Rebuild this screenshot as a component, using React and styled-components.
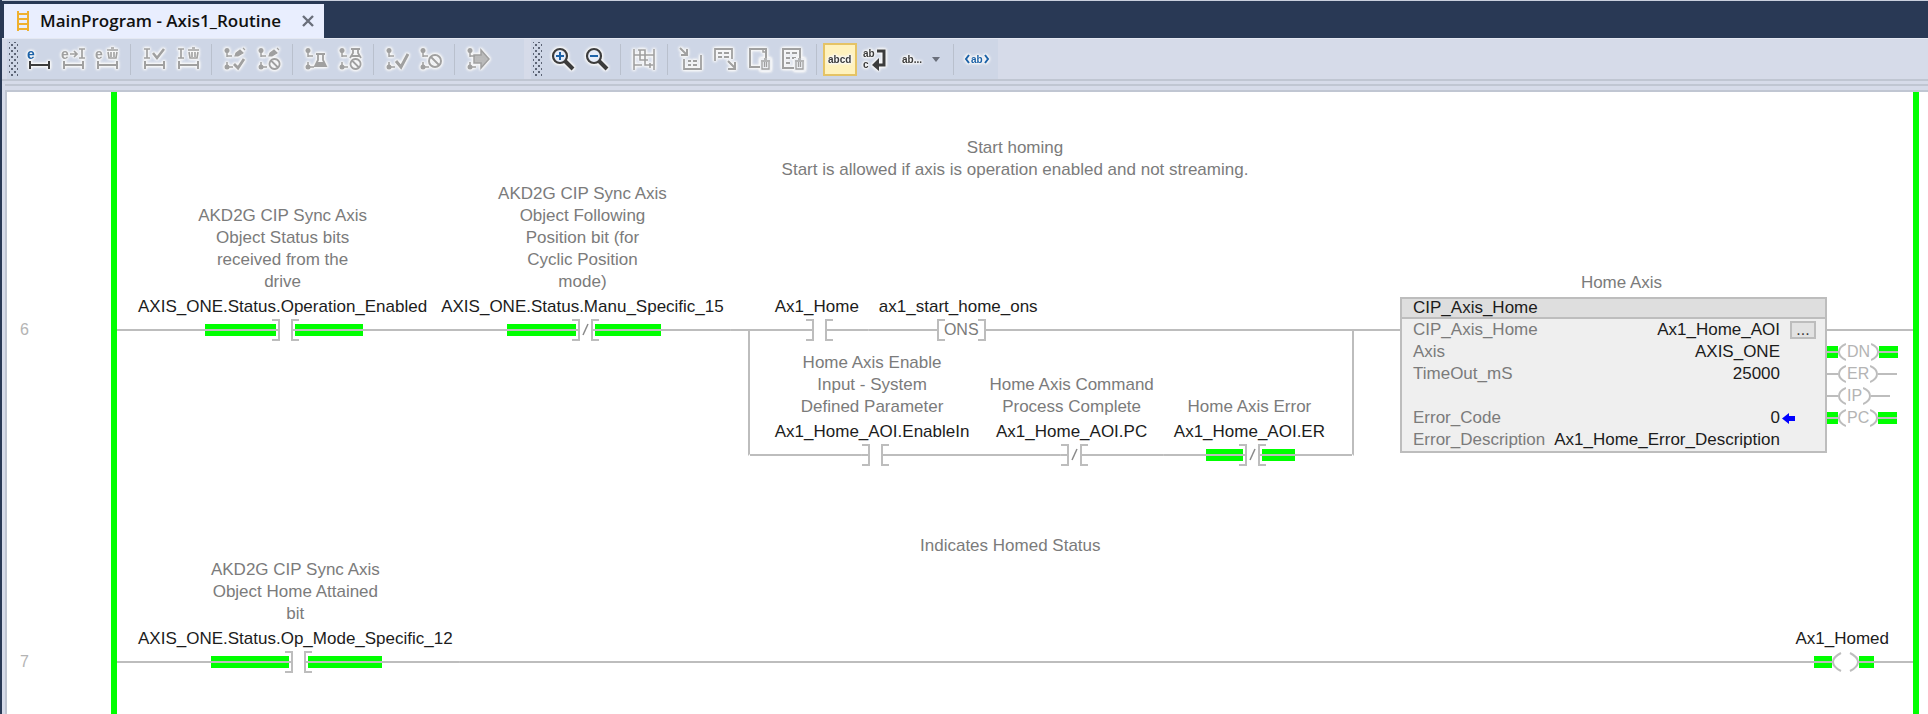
import styled, { createGlobalStyle, css } from "styled-components";

const GREEN = "#00ff00";
const WIRE = "#bdbdbd";

const GlobalStyle = createGlobalStyle`
	html, body, #root {
		height: 100%;
	}
	body {
		margin: 0;
		background: #ffffff;
		font-family: "Liberation Sans", Arial, sans-serif;
		font-size: 17px;
		line-height: 22px;
		color: #1c1c1c;
	}
	h1, p {
		margin: 0;
	}
`

const Window = styled.div`
		display: flex;
		flex-direction: column;
		min-height: 100%;
		box-sizing: border-box;
		border-left: 2px solid #293955;
		background: #d6dbe9;
	`

/* ---- tab strip ---- */

const TabStrip = styled.div`
		display: flex;
		padding: 3px 0 0 2px;
		border-top: 1px solid #c9d0dd;
		background: #293955;
	`

const Tab = styled.div`
		display: flex;
		align-items: center;
		height: 34px;
		padding: 0 6px 0 12px;
		background: #e9eefe;
		color: #111111;
	`

const TabTitle = styled.h1`
		margin: 0 17px 0 10px;
		font-family: "Open Sans", "Noto Sans", sans-serif;
		font-size: 17px;
		font-weight: 600;
		line-height: 24px;
	`

const CloseButton = styled.button`
		display: flex;
		padding: 4px;
		border: 0;
		background: none;
		color: #6a6f7b;
	`

/* ---- tool bar ---- */

const Bars = styled.div`
		display: flex;
		gap: 7px;
		padding-left: 5px;
		border-top: 1px solid #e4e8f2;
		border-bottom: 2px solid #c0c6d2;
	`

const Bar = styled.div`
		display: flex;
		align-items: center;
		height: 40px;
		padding: 0 ${p => p.$tail || 0}px 0 2px;
		background: #ced6e6;
	`

const Grip = styled.span`
		width: 9px;
		height: 34px;
		margin-right: 4px;
		background-image:
			radial-gradient(circle, #5c6475 1px, transparent 1px),
			radial-gradient(circle, #5c6475 1px, transparent 1px);
		background-size: 6px 6px;
		background-position: 0 0, 3px 3px;
	`

const ToolButton = styled.button`
		display: flex;
		align-items: center;
		justify-content: center;
		width: 34px;
		height: 33px;
		box-sizing: border-box;
		padding: 0;
		border: 2px solid transparent;
		background: none;
		color: ${p => p.disabled ? "#a0a0a0" : "#3c3c3c"};
		${p => p.$active && css`
			border-color: #e5c365;
			background: #fff2bd;
		`}
		${p => p.$narrow && css`
			width: 22px;
		`}
	`

const Separator = styled.span`
		width: 1px;
		height: 31px;
		margin: 0 6px;
		background: #b9c0cd;
	`

const Icon = styled.svg`
		flex: none;
		fill: none;
		stroke: currentColor;
		stroke-width: 2;
		filter: drop-shadow(0 0 1px #f8f8f8) drop-shadow(0 0 1px #f8f8f8) drop-shadow(0 0 1px #f8f8f8);
		text {
			fill: currentColor;
			stroke: none;
			font-family: "Liberation Sans", Arial, sans-serif;
			font-size: 10px;
			font-weight: 700;
		}
		.edit {
			font-size: 14px;
		}
	`

const Groove = styled.div`
		height: 3px;
		margin-left: 3px;
		border-bottom: 2px solid #c0c6d2;
	`

/* ---- ladder ---- */

const Sheet = styled.main`
		flex: 1;
		display: flex;
		flex-direction: column;
		margin: 4px 0 0 3px;
		border-top: 2px solid #c0c6d2;
		border-left: 2px solid #c0c6d2;
		background: #ffffff;
	`

const Rung = styled.section`
		display: grid;
		grid-template-columns: 104px 6px 1fr 6px 9px;
		grid-template-rows: auto auto auto;
		&:last-child {
			flex: 1;
			grid-template-rows: auto auto 1fr;
		}
	`

const Rail = styled.div`
		grid-row: 1 / -1;
		grid-column: ${p => p.$right ? 4 : 2};
		background: ${GREEN};
	`

const RungNumber = styled.span`
		grid-row: 2;
		grid-column: 1;
		align-self: end;
		padding-left: 13px;
		color: #b4b4b4;
		font-size: 16px;
	`

const RungComment = styled.p`
		grid-row: 1;
		grid-column: 3;
		padding: 45px 0 2px;
		color: #7b7b7b;
		text-align: center;
		white-space: pre;
	`

const Logic = styled.div`
		grid-row: 2 / span 2;
		grid-column: 3;
		display: grid;
		grid-template-rows: subgrid;
		grid-template-columns: ${p => p.$columns};
		padding-bottom: 24px;
	`

const Run = styled.div`
		--pad: ${p => p.$tight ? 7 : 10}px;
		display: flex;
		grid-row: 1;
	`

const Wire = styled.span`
		flex: 1 0 ${p => p.$min || 0}px;
		align-self: flex-end;
		height: 22px;
		background: linear-gradient(${WIRE}, ${WIRE}) center / 100% 2px no-repeat;
	`

const StartWire = styled(Wire)`
		flex: none;
		width: ${p => p.$width}px;
	`

const Element = styled.div`
		display: flex;
		flex-direction: column;
		justify-content: flex-end;
	`

const Note = styled.p`
		margin-bottom: 3px;
		padding: 0 var(--pad, 10px);
		color: #7b7b7b;
		text-align: center;
		white-space: pre;
	`

const Tag = styled.span`
		margin: 0 var(--pad, 10px) 1px;
		text-align: center;
		white-space: nowrap;
	`

const Symbols = styled.div`
		display: flex;
		height: 22px;
	`

const Lead = styled.span`
		display: flex;
		align-items: center;
		flex: 1 1 ${p => p.$left ? 6 : 0}px;
		justify-content: ${p => p.$left ? "flex-end" : "flex-start"};
		padding: ${p => p.$left ? "0 0 0 var(--pad, 10px)" : "0 var(--pad, 10px) 0 0"};
		background: linear-gradient(${WIRE}, ${WIRE}) center / 100% 2px no-repeat;
	`

const Power = styled.span`
		width: 50%;
		height: 12px;
		background: linear-gradient(${GREEN} 5px, ${WIRE} 5px, ${WIRE} 7px, ${GREEN} 7px);
	`

const Glyph = styled.svg`
		flex: none;
		fill: none;
		stroke: ${WIRE};
		stroke-width: 2;
	`

const OneShot = styled.span`
		padding: 0 5px;
		border: solid ${WIRE};
		border-width: 0 2px;
		background:
			linear-gradient(${WIRE}, ${WIRE}) left top / 6px 2px,
			linear-gradient(${WIRE}, ${WIRE}) left bottom / 6px 2px,
			linear-gradient(${WIRE}, ${WIRE}) right top / 6px 2px,
			linear-gradient(${WIRE}, ${WIRE}) right bottom / 6px 2px;
		background-repeat: no-repeat;
		color: #7b7b7b;
		font-size: 16px;
	`

const Branch = styled.div`
		grid-row: 1 / span 2;
		display: grid;
		grid-template-rows: subgrid;
	`

const Leg = styled.div`
		display: flex;
		align-items: flex-end;
	`

const LowerLeg = styled.div`
		margin: -12px 0 10px;
		padding-top: 23px;
		border: solid ${WIRE};
		border-width: 0 2px 2px;
		border-bottom-color: transparent;
	`

const LowerLegItems = styled.div`
		display: flex;
		align-items: flex-end;
		margin-bottom: -12px;
	`

const BlockArea = styled.div`
		grid-row: 1 / span 2;
		align-self: end;
		display: flex;
		align-items: flex-end;
		padding-bottom: 13px;
	`

const BlockTable = styled.table`
		width: 427px;
		border: 2px solid ${WIRE};
		border-spacing: 0;
		background: #efefef;
		caption {
			padding: 0 0 3px 16px;
			color: #7b7b7b;
		}
		thead th {
			padding: 0 11px;
			border-bottom: 2px solid ${WIRE};
			background: #dedede;
			font-weight: 400;
			line-height: 18px;
			text-align: left;
		}
		tbody th {
			height: 22px;
			padding: 0 0 0 11px;
			color: #7b7b7b;
			font-weight: 400;
			text-align: left;
		}
		td {
			padding: 0;
			text-align: right;
		}
		td:last-child {
			width: 45px;
			text-align: left;
		}
	`

const MoreButton = styled.button`
		display: block;
		width: 26px;
		height: 18px;
		margin-left: 10px;
		padding: 0;
		border: 2px solid ${WIRE};
		background: #e2e2e2;
		color: #3c3c3c;
		font: 16px/10px "Liberation Sans", Arial, sans-serif;
	`

const ArrowIcon = styled.svg`
		display: block;
		margin-left: 2px;
		fill: #0000ff;
	`

const Outputs = styled.div`
		width: 86px;
		padding-bottom: 24px;
	`

const OutputWire = styled(Wire)`
		display: block;
	`

const OutputRow = styled.div`
		display: flex;
		align-items: center;
		height: 22px;
		color: #b4b4b4;
		font-size: 16px;
	`

const OutputLead = styled.span`
		width: ${p => p.$tail ? 19 : 11}px;
		height: ${p => p.$on ? 12 : 2}px;
		background: ${p => p.$on
			? `linear-gradient(${GREEN} 5px, ${WIRE} 5px, ${WIRE} 7px, ${GREEN} 7px)`
			: WIRE};
	`

const OutputName = styled.span`
		margin: 0 1px;
	`

const measure = <path d="M3 14v8M22 14v8M3 18h19" />
const dots = (
	<>
		<path d="M4 4v6M4 9h5M4 15v5M4 20h6" strokeWidth="1.500" />
		<circle cx="4" cy="3.500" r="2.500" fill="currentColor" stroke="none" />
		<circle cx="4" cy="20" r="2.500" fill="currentColor" stroke="none" />
	</>
)
const pencil = <path d="M12 9l1-3 4-3 3 3-5 3zM20 1l2 2" fill="currentColor" strokeWidth="1.200" />
const ban = <path d="M17.500 12a5 5 0 1 0 .1 0zM14 13.500l7 7" strokeWidth="1.800" />
const bin = <path d="M12 3h11M16 1h3M13 5l1 6h7l1-6M16 5v5M19 5v5" strokeWidth="1.600" />
const smallBin = (
	<>
		<path d="M13 11h11v13H13z" fill="#eef0f4" stroke="none" />
		<path d="M14 14h9M17 12h3M15 15v7h7v-7M17.500 15v5M19.500 15v5" strokeWidth="1.300" />
	</>
)

const icons = {
	start: <><text className="edit" x="0" y="12" style={{ fill: "#1c62a8" }}>e</text>{measure}</>,
	insert: (
		<>
			<text className="edit" x="0" y="12">e</text>
			<path d="M9 7h7M13 4l3 3-3 3M18 2h6M18 11h6M21 2v9" strokeWidth="1.700" />
			{measure}
		</>
	),
	removeEdit: <><text className="edit" x="0" y="12">e</text>{bin}{measure}</>,
	accept: (
		<>
			<path d="M2 2h6M2 11h6M5 2v9" strokeWidth="1.700" />
			<path d="M11 6l4 5 7-9" strokeWidth="2.600" />
			{measure}
		</>
	),
	cancel: <><path d="M2 2h6M2 11h6M5 2v9" strokeWidth="1.700" />{bin}{measure}</>,
	acceptProgram: <>{dots}{pencil}<path d="M11 17l4 4 6-9" strokeWidth="2.800" /></>,
	cancelProgram: <>{dots}{pencil}{ban}</>,
	test: (
		<>
			{dots}
			<path d="M12 7h9M14 7v6l-3 6h11l-3-6V7" strokeWidth="1.800" />
			<path d="M12 17h9" strokeWidth="4" />
		</>
	),
	untest: (
		<>
			{dots}
			<path d="M13 2h9M15 2v4l-3 5M20 2v4l3 5M14 9h8" strokeWidth="1.800" />
			{ban}
		</>
	),
	assemble: <>{dots}<path d="M11 14l5 6 7-13" strokeWidth="3" /></>,
	disassemble: <>{dots}<circle cx="16" cy="14" r="6" /><path d="M12 10l8 8" /></>,
	finalize: (
		<>
			{dots}
			<path d="M8 8h7V3l8 9-8 9v-5H8z" fill="currentColor" fillOpacity="0.7" strokeWidth="1.500" />
		</>
	),
	zoomIn: (
		<>
			<path d="M14 14l8 8" strokeWidth="4" />
			<circle cx="9" cy="9" r="7" fill="#e6ecf8" strokeWidth="2.200" />
			<path d="M5 9h8M9 5v8" stroke="#1c62a8" />
		</>
	),
	zoomOut: (
		<>
			<path d="M14 14l8 8" strokeWidth="4" />
			<circle cx="9" cy="9" r="7" fill="#e6ecf8" strokeWidth="2.200" />
			<path d="M5 9h8" stroke="#1c62a8" />
		</>
	),
	branch: <path d="M2 2v21M22 2v21M2 8h20M2 18h8M8 3v10h8M8 3h-2M8 3h5v15h8M18 16v5" strokeWidth="1.600" />,
	rungIn: (
		<>
			<path d="M1 1l6 6M8 2v6H2" />
			<path d="M5 12v10h17V8M5 22h17M9 14h3M14 14h4M9 18h3M14 18h4" strokeWidth="1.800" />
		</>
	),
	rungOut: (
		<>
			<path d="M2 14V2h17v10M5 6h4M11 6h5M5 10h4M11 10h5" strokeWidth="1.800" />
			<path d="M15 14l7 7M22 15v7h-7" />
		</>
	),
	pageDelete: <><path d="M19 11V2H3v18h10" /><path d="M16 2v3h3" strokeWidth="1.500" />{smallBin}</>,
	listDelete: (
		<>
			<path d="M19 11V2H2v19h11" />
			<path d="M5 6h4M11 6h5M5 11h4M11 11h4M5 16h4" strokeWidth="1.800" />
			{smallBin}
		</>
	),
}

const editTools = [
	["Start pending edits", icons.start, true],
	["Insert edits", icons.insert],
	["Delete edits", icons.removeEdit],
	null,
	["Accept pending rung", icons.accept],
	["Cancel pending rung", icons.cancel],
	null,
	["Accept program edits", icons.acceptProgram],
	["Cancel program edits", icons.cancelProgram],
	null,
	["Test program edits", icons.test],
	["Untest program edits", icons.untest],
	null,
	["Assemble edits", icons.assemble],
	["Cancel accepted edits", icons.disassemble],
	null,
	["Finalize all edits", icons.finalize],
]

const viewTools = [
	["Zoom in", icons.zoomIn, true],
	["Zoom out", icons.zoomOut, true],
	null,
	["Toggle branch", icons.branch],
	null,
	["Insert into rung", icons.rungIn],
	["Move out of rung", icons.rungOut],
	["Clear rung comment", icons.pageDelete],
	["Clear all comments", icons.listDelete],
]

const Tools = ({ items }) => items.map((item, i) => item
	? (
		<ToolButton key={i} disabled={!item[2]} aria-label={item[0]}>
			<Icon width="24" height="24" viewBox="0 0 24 24">{item[1]}</Icon>
		</ToolButton>
	)
	: <Separator key={i} />
)

const Contact = ({ closed, on }) => (
	<Glyph width="27" height="22" viewBox="0 0 27 22">
		{on && <path d="M0 5h4v12H0zM23 5h4v12h-4z" fill={GREEN} stroke="none" />}
		<path d="M0 11h7M20 11h7" />
		<path d="M0 1h7v20H0M27 1h-7v20h7" />
		{closed && <path d="M11 16l5-11" stroke="#8a8a8a" strokeWidth="1.500" />}
	</Glyph>
)

const Coil = () => (
	<Glyph width="27" height="22" viewBox="0 0 27 22">
		<path d="M9 2Q1 6 1 11T9 20M18 2Q26 6 26 11T18 20" />
	</Glyph>
)

const Instruction = ({ note, tag, on, children }) => (
	<Element>
		{note && <Note>{note}</Note>}
		<Tag>{tag}</Tag>
		<Symbols>
			<Lead $left>{on && <Power />}</Lead>
			{children}
			<Lead>{on && <Power />}</Lead>
		</Symbols>
	</Element>
)

const Output = ({ name, on }) => (
	<OutputRow>
		<OutputLead $on={on} />
		<Glyph width="8" height="18" viewBox="0 0 8 18"><path d="M8 1Q1 4 1 9T8 17" /></Glyph>
		<OutputName>{name}</OutputName>
		<Glyph width="8" height="18" viewBox="0 0 8 18"><path d="M0 1Q7 4 7 9T0 17" /></Glyph>
		<OutputLead $on={on} $tail />
	</OutputRow>
)

const parameters = [
	["CIP_Axis_Home", "Ax1_Home_AOI", <MoreButton key="more" aria-label="Open Ax1_Home_AOI">...</MoreButton>],
	["Axis", "AXIS_ONE"],
	["TimeOut_mS", "25000"],
	["", ""],
	["Error_Code", "0", (
		<ArrowIcon key="arrow" width="13" height="11" viewBox="0 0 13 11">
			<path d="M0 5.500L7 0v3h6v5H7v3z" />
		</ArrowIcon>
	)],
	["Error_Description", "Ax1_Home_Error_Description"],
]

const HomeBlock = () => (
	<BlockArea>
		<BlockTable>
			<caption>Home Axis</caption>
			<thead>
				<tr><th colSpan="3">CIP_Axis_Home</th></tr>
			</thead>
			<tbody>
				{parameters.map(([name, value, extra], i) => (
					<tr key={i}>
						<th>{name}</th>
						<td>{value}</td>
						<td>{extra}</td>
					</tr>
				))}
			</tbody>
		</BlockTable>
		<Outputs>
			<OutputWire />
			<Output name="DN" on />
			<Output name="ER" />
			<Output name="IP" />
			<Output name="PC" on />
		</Outputs>
	</BlockArea>
)

const App = () => {
	return (
		<Window>
			<GlobalStyle />
			<TabStrip>
				<Tab>
					<svg width="14" height="20" viewBox="0 0 14 20" fill="none" stroke="#efb02e" strokeWidth="2">
						<path d="M2 0v20M12 0v20M2 3h10M2 8h10M2 13h10M2 18h10" />
					</svg>
					<TabTitle>MainProgram - Axis1_Routine</TabTitle>
					<CloseButton aria-label="Close tab">
						<svg width="12" height="12" viewBox="0 0 12 12" stroke="currentColor" strokeWidth="2.400">
							<path d="M1 1l10 10M11 1L1 11" />
						</svg>
					</CloseButton>
				</Tab>
			</TabStrip>

			<Bars>
				<Bar $tail={29}>
					<Grip />
					<Tools items={editTools} />
				</Bar>
				<Bar $tail={4}>
					<Grip />
					<Tools items={viewTools} />
					<Separator />
					<ToolButton $active aria-label="Show full names">
						<Icon width="26" height="24" viewBox="0 0 26 24">
							<text x="1" y="16">abcd</text>
						</Icon>
					</ToolButton>
					<ToolButton aria-label="Wrap names">
						<Icon width="26" height="24" viewBox="0 0 26 24">
							<text x="2" y="10">ab</text>
							<text x="2" y="21">c</text>
							<path d="M16 4h7v14h-6" strokeWidth="3" />
							<path d="M18 11v13l-7-6z" fill="currentColor" stroke="none" />
						</Icon>
					</ToolButton>
					<ToolButton aria-label="Truncate names">
						<Icon width="30" height="24" viewBox="0 0 30 24">
							<text x="9" y="16">ab...</text>
						</Icon>
					</ToolButton>
					<ToolButton $narrow aria-label="More name options">
						<svg width="8" height="5" viewBox="0 0 8 5" fill="#6a6f7b"><path d="M0 0h8L4 5z" /></svg>
					</ToolButton>
					<Separator />
					<ToolButton aria-label="Show tag values">
						<Icon width="26" height="24" viewBox="0 0 26 24" color="#1c62a8">
							<text x="7" y="16">ab</text>
							<path d="M5 8l-3 4 3 4M21 8l3 4-3 4" />
						</Icon>
					</ToolButton>
				</Bar>
			</Bars>
			<Groove />

			<Sheet>
				<Rung>
					<Rail />
					<Rail $right />
					<RungNumber>6</RungNumber>
					<RungComment>{"Start homing\nStart is allowed if axis is operation enabled and not streaming."}</RungComment>
					<Logic $columns="auto auto 1fr auto">
						<Run $tight>
							<StartWire $width={14} />
							<Instruction
								note={"AKD2G CIP Sync Axis\nObject Status bits\nreceived from the\ndrive"}
								tag="AXIS_ONE.Status.Operation_Enabled" on>
								<Contact on />
							</Instruction>
							<Instruction
								note={"AKD2G CIP Sync Axis\nObject Following\nPosition bit (for\nCyclic Position\nmode)"}
								tag="AXIS_ONE.Status.Manu_Specific_15" on>
								<Contact on closed />
							</Instruction>
							<Wire $min={17} />
						</Run>
						<Branch>
							<Leg>
								<StartWire $width={17} />
								<Instruction tag="Ax1_Home"><Contact /></Instruction>
								<Instruction tag="ax1_start_home_ons"><OneShot>ONS</OneShot></Instruction>
								<Wire />
							</Leg>
							<LowerLeg>
								<LowerLegItems>
									<StartWire $width={15} />
									<Instruction note={"Home Axis Enable\nInput - System\nDefined Parameter"} tag="Ax1_Home_AOI.EnableIn">
										<Contact />
									</Instruction>
									<Instruction note={"Home Axis Command\nProcess Complete"} tag="Ax1_Home_AOI.PC">
										<Contact closed />
									</Instruction>
									<Instruction note="Home Axis Error" tag="Ax1_Home_AOI.ER" on>
										<Contact on closed />
									</Instruction>
									<Wire $min={17} />
								</LowerLegItems>
							</LowerLeg>
						</Branch>
						<Run><Wire /></Run>
						<HomeBlock />
					</Logic>
				</Rung>

				<Rung>
					<Rail />
					<Rail $right />
					<RungNumber>7</RungNumber>
					<RungComment>{"Indicates Homed Status  "}</RungComment>
					<Logic $columns="auto 1fr auto">
						<Run $tight>
							<StartWire $width={14} />
							<Instruction
								note={"AKD2G CIP Sync Axis\nObject Home Attained\nbit"}
								tag="AXIS_ONE.Status.Op_Mode_Specific_12" on>
								<Contact on />
							</Instruction>
						</Run>
						<Run><Wire /></Run>
						<Run>
							<Instruction tag="Ax1_Homed" on><Coil /></Instruction>
							<Wire $min={14} />
						</Run>
					</Logic>
				</Rung>
			</Sheet>
		</Window>
	)
}

export default App
